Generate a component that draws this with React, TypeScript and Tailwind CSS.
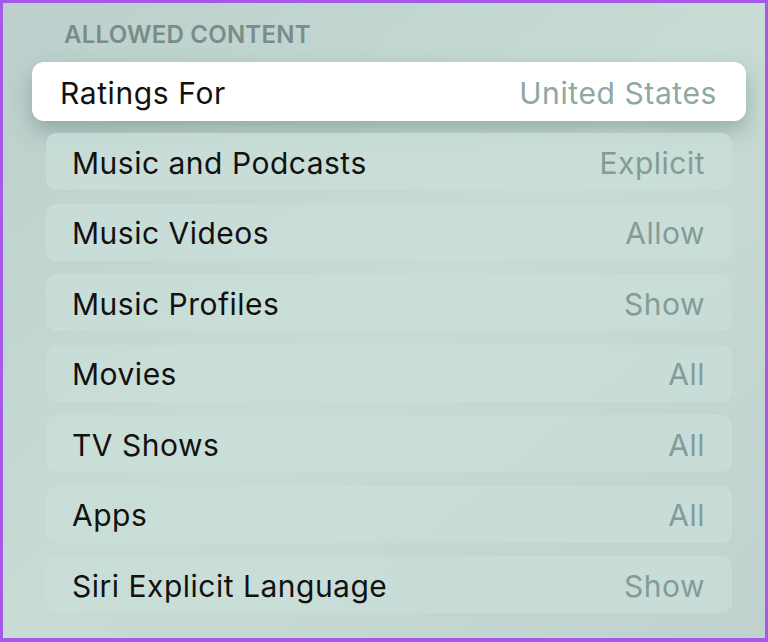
import React from 'react';

const rows = [
  { label: 'Music and Podcasts', value: 'Explicit' },
  { label: 'Music Videos', value: 'Allow' },
  { label: 'Music Profiles', value: 'Show' },
  { label: 'Movies', value: 'All' },
  { label: 'TV Shows', value: 'All' },
  { label: 'Apps', value: 'All' },
  { label: 'Siri Explicit Language', value: 'Show' },
];

export default function App() {
  return (
    <div
      className="w-[768px] h-[642px] border-[3px] border-b-4 border-[#a35ae8] bg-gradient-to-br from-[#bccfcc] via-[#c8dcd4] to-[#bfd2ce] overflow-hidden"
      style={{ fontFamily: 'Inter, "Noto Sans", sans-serif' }}
    >
      <div className="pl-[43px] pr-[33px] flex flex-col">
        {/* Section header */}
        <div className="h-[59px] pl-[18px] pt-[17px] text-[24px] leading-[30px] font-semibold tracking-[0.01em] text-[#798d8a]">
          ALLOWED CONTENT
        </div>

        {/* Focused row */}
        <div className="-mx-[14px] h-[59px] pt-[3px] rounded-[12px] bg-white shadow-[0_10px_22px_rgba(60,90,85,0.35)] flex items-center justify-between pl-[28px] pr-[29px] text-[30px] tracking-[0.6px]">
          <span className="text-[#111]">Ratings For</span>
          <span className="text-[#8ea8a4]">United States</span>
        </div>

        <div className="mt-[12px] flex flex-col gap-[13.5px]">
          {rows.map((r) => (
            <div
              key={r.label}
              className="h-[57px] pt-[3px] rounded-[10px] bg-[#c9ded8]/80 flex items-center justify-between pl-[26px] pr-[27px] text-[30px] tracking-[0.5px]"
            >
              <span className="text-[#111]">{r.label}</span>
              <span className="text-[#849b97]">{r.value}</span>
            </div>
          ))}
        </div>
      </div>
    </div>
  );
}
